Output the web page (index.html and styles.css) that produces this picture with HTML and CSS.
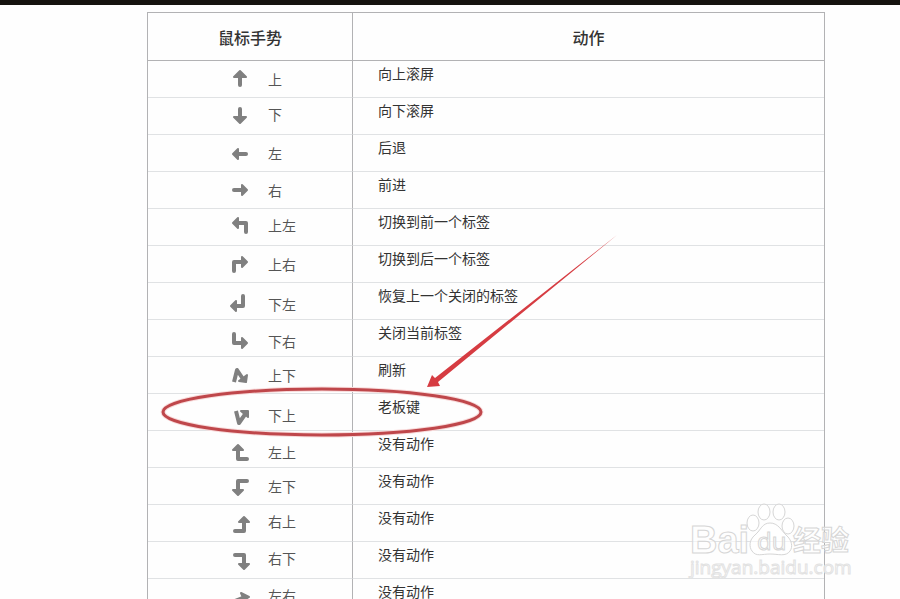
FILE: index.html
```html
<!DOCTYPE html>
<html lang="zh-CN">
<head>
    <meta charset="UTF-8">
    <meta name="viewport" content="width=device-width, initial-scale=1.0">
    <title>鼠标手势</title>
    <link rel="stylesheet" href="styles.css">
</head>
<body>
    <header class="top-bar"></header>

    <main class="gesture-page">
        <table class="gesture-table">
            <thead>
                <tr>
                    <th class="gesture-col" scope="col">鼠标手势</th>
                    <th scope="col">动作</th>
                </tr>
            </thead>
            <tbody>
                <tr>
                    <td><div class="gesture"><svg class="icon" viewBox="0 0 20 20"><path class="head" d="M10 2L16 8H4z"/><path d="M10 6V16"/></svg>上</div></td>
                    <td>向上滚屏</td>
                </tr>
                <tr>
                    <td><div class="gesture high"><svg class="icon" viewBox="0 0 20 20"><path class="head" d="M10 19L16 13H4z"/><path d="M10 15V5"/></svg>下</div></td>
                    <td>向下滚屏</td>
                </tr>
                <tr>
                    <td><div class="gesture"><svg class="icon" viewBox="0 0 20 20"><path class="head" d="M3 11L8 6V16z"/><path d="M6 11H16"/></svg>左</div></td>
                    <td>后退</td>
                </tr>
                <tr>
                    <td><div class="gesture"><svg class="icon" viewBox="0 0 20 20"><path class="head" d="M17 10L12 5V15z"/><path d="M14 10H4"/></svg>右</div></td>
                    <td>前进</td>
                </tr>
                <tr>
                    <td><div class="gesture high"><svg class="icon" viewBox="0 0 20 20"><path class="head" d="M3 8L8 3V13z"/><path d="M6 8H16V17"/></svg>上左</div></td>
                    <td>切换到前一个标签</td>
                </tr>
                <tr>
                    <td><div class="gesture"><svg class="icon" viewBox="0 0 20 20"><path class="head" d="M17 8L12 3V13z"/><path d="M14 8H4V17"/></svg>上右</div></td>
                    <td>切换到后一个标签</td>
                </tr>
                <tr>
                    <td><div class="gesture low"><svg class="icon" viewBox="0 0 20 20"><path class="head" d="M1 12L6 7V17z"/><path d="M4 12H13V2"/></svg>下左</div></td>
                    <td>恢复上一个关闭的标签</td>
                </tr>
                <tr>
                    <td><div class="gesture low"><svg class="icon" viewBox="0 0 20 20"><path class="head" d="M17 12L12 7V17z"/><path d="M14 12H4V3"/></svg>下右</div></td>
                    <td>关闭当前标签</td>
                </tr>
                <tr>
                    <td><div class="gesture"><svg class="icon" viewBox="0 0 20 20"><path class="head" d="M16 17L9 16L17 10z"/><path class="butt" d="M4 17L7 5L13 14"/></svg>上下</div></td>
                    <td>刷新</td>
                </tr>
                <tr>
                    <td><div class="gesture low"><svg class="icon" viewBox="0 0 20 20"><path class="head" d="M18 6L11 6L18 12z"/><path class="butt" d="M6 6L9 18L16 8"/></svg>下上</div></td>
                    <td>老板键</td>
                </tr>
                <tr>
                    <td><div class="gesture low"><svg class="icon" viewBox="0 0 20 20"><path class="head" d="M8 3L13 8H3z"/><path d="M8 6V17H17"/></svg>左上</div></td>
                    <td>没有动作</td>
                </tr>
                <tr>
                    <td><div class="gesture"><svg class="icon" viewBox="0 0 20 20"><path class="head" d="M8 19L13 14H3z"/><path d="M8 16V5H17"/></svg>左下</div></td>
                    <td>没有动作</td>
                </tr>
                <tr>
                    <td><div class="gesture high"><svg class="icon" viewBox="0 0 20 20"><path class="head" d="M14 6L19 11H9z"/><path d="M14 9V20H5"/></svg>右上</div></td>
                    <td>没有动作</td>
                </tr>
                <tr>
                    <td><div class="gesture high"><svg class="icon" viewBox="0 0 20 20"><path class="head" d="M14 21L19 16H9z"/><path d="M14 18V7H5"/></svg>右下</div></td>
                    <td>没有动作</td>
                </tr>
                <tr>
                    <td><div class="gesture high"><svg class="icon" viewBox="0 0 20 20"><path class="head" d="M19 12L11 8L14 15z"/><path class="butt" d="M15 12L5 16L17 20"/></svg>左右</div></td>
                    <td>没有动作</td>
                </tr>
            </tbody>
        </table>

        <!-- Red circle and arrow around the boss key -->
        <svg class="marker" viewBox="0 0 470 210" aria-hidden="true">
            <ellipse class="glow" cx="172" cy="182" rx="159" ry="23"/>
            <ellipse class="ring" cx="172" cy="182" rx="159" ry="23"/>
            <path class="arrow" d="M467 5L288 152L290 156L277 157L282 145L285 148z"/>
        </svg>
    </main>

    <svg class="watermark" viewBox="0 0 170 80" role="img" aria-label="Baidu 经验">
        <ellipse cx="65" cy="22" rx="6" ry="8"/>
        <ellipse cx="76" cy="11" rx="6" ry="8"/>
        <ellipse cx="91" cy="11" rx="6" ry="8"/>
        <ellipse cx="100" cy="25" rx="6" ry="8"/>
        <path d="M82 22C90 22 93 29 98 34C104 39 105 46 102 50C98 56 90 53 82 53C74 53 68 56 64 50C61 46 61 39 67 34C73 29 74 22 82 22z"/>
        <text class="brand" x="2" y="52">Bai</text>
        <text class="brand-du" x="69" y="49">du</text>
        <text class="brand-cn" x="105" y="50">经验</text>
        <text class="site" x="2" y="73">jingyan.baidu.com</text>
    </svg>
</body>
</html>
```
FILE: styles.css
```css
* {
    box-sizing: border-box;
}

body {
    margin: 0;
    height: 100vh;
    overflow: hidden;
    position: relative;
    background: #fefefe;
    color: #333;
    font-family: "Noto Sans CJK SC", "Liberation Sans", sans-serif;
    font-size: 14px;
}

.top-bar {
    height: 5px;
    background: #15130f;
}

.gesture-page {
    position: relative;
    padding: 7px 75px 0 147px;
}

/* Table */
.gesture-table {
    width: 100%;
    table-layout: fixed;
    border-collapse: separate;
    border-spacing: 0;
    border: 1px solid #b2b2b4;
}

.gesture-table th {
    height: 48px;
    padding: 0;
    border-bottom: 1px solid #b2b2b4;
    font-size: 16px;
    font-weight: 500;
    line-height: 24px;
}

.gesture-col {
    width: 205px;
}

.gesture-table td {
    height: 37px;
    padding: 2px 0 0 25px;
    border-bottom: 1px solid #e0e2e4;
    line-height: 20px;
    vertical-align: top;
}

.gesture-table td:first-child {
    padding: 0 0 0 82px;
}

.gesture-table th:first-child,
.gesture-table td:first-child {
    border-right: 1px solid #b2b2b4;
}

.gesture {
    display: flex;
    align-items: center;
    gap: 18px;
    height: 36px;
    color: #555;
}

.gesture.high {
    padding-bottom: 4px;
}

.gesture.low {
    padding-top: 6px;
}

.icon {
    width: 20px;
    height: 20px;
    overflow: visible;
    fill: none;
    stroke: #808080;
    stroke-width: 4;
    stroke-linecap: round;
    stroke-linejoin: round;
}

.icon .head {
    fill: #808080;
    stroke-width: 2;
}

.icon .butt {
    stroke-linecap: butt;
}

/* Annotation over the table */
.marker {
    position: absolute;
    left: 150px;
    top: 225px;
    width: 470px;
    height: 210px;
    pointer-events: none;
}

.glow {
    fill: none;
    stroke: #f8dada;
    stroke-width: 5;
}

.ring {
    fill: none;
    stroke: #bf474b;
    stroke-width: 3;
}

.arrow {
    fill: #d63c42;
}

/* Watermark */
.watermark {
    position: absolute;
    right: 42px;
    bottom: 18px;
    width: 170px;
    height: 80px;
    overflow: visible;
    fill: rgba(255, 255, 255, 0.6);
    stroke: #d6d6d6;
    stroke-width: 1;
}

.brand {
    font: bold 38px "Liberation Sans", sans-serif;
}

.brand-du {
    font: 24px "Open Sans", sans-serif;
}

.brand-cn {
    font: bold 28px "Noto Sans CJK SC", sans-serif;
}

.site {
    font: 19px "Open Sans", sans-serif;
    stroke: #e2e2e2;
}
```
